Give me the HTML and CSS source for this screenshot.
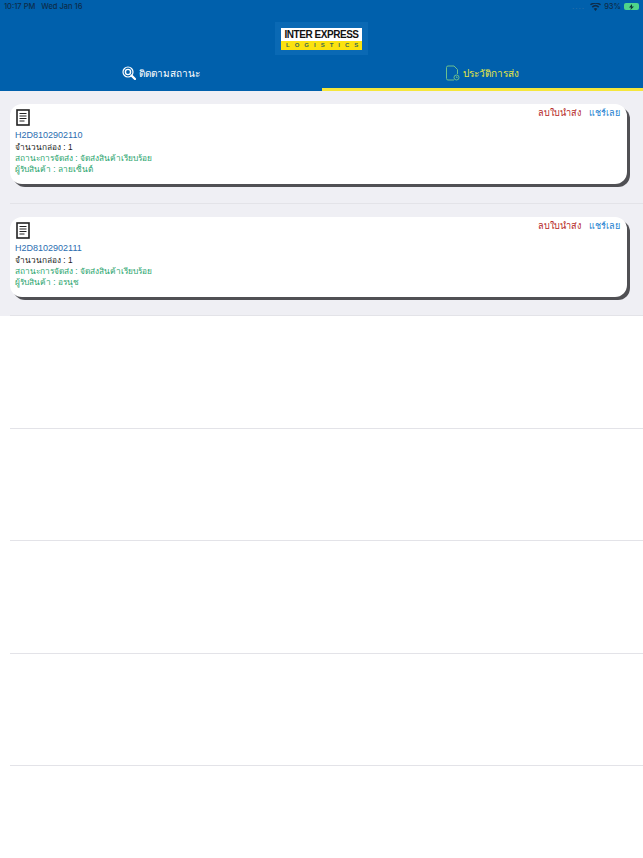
FILE: index.html
```html
<!DOCTYPE html>
<html lang="th">
<head>
  <meta charset="UTF-8" />
  <title>Inter Express Logistics</title>
  <link rel="stylesheet" href="styles.css">
</head>
<body>
<header class="app-header">
  <div class="status-bar">
    <span>10:17 PM &nbsp; Wed Jan 16</span>
    <div class="status-right">
      <span class="signal-dots">....</span>
      <svg class="wifi" width="11" height="8" viewBox="0 0 22 16"><path d="M11 16 7.4 11.6a5.6 5.6 0 0 1 7.2 0zM5.6 9.4 3.4 6.8a11.8 11.8 0 0 1 15.2 0l-2.2 2.6a8.4 8.4 0 0 0-10.8 0zM1.7 4.7 0 2.6a17 17 0 0 1 22 0l-1.7 2.1a14.4 14.4 0 0 0-18.6 0z" fill="#0d2c4a"/></svg>
      <span>93%</span>
      <div class="battery">
        <svg width="7" height="6" viewBox="0 0 7 6"><path d="M4 0 1 3.400h2L2.500 6 6 2.500H4z" fill="#0d3a3a"/></svg>
      </div>
    </div>
  </div>
  <div class="logo-row">
    <div class="logo">
      <div class="logo-top">INTER EXPRESS</div>
      <div class="logo-bottom">LOGISTICS</div>
    </div>
  </div>
  <nav class="tabs">
    <div class="tab">
      <svg width="14" height="14" viewBox="0 0 14 14" fill="none" stroke="#fff"><circle cx="6" cy="6" r="5" stroke-width="1.2"/><circle cx="6" cy="6" r="2.6" stroke-width="1.4"/><path d="M9.6 9.6 13 13" stroke-width="2.2" stroke-linecap="round"/></svg>
      <span>ติดตามสถานะ</span>
    </div>
    <div class="tab tab-active">
      <svg width="14" height="16" viewBox="0 0 14 16" fill="none" stroke="#6cc08e" stroke-width="1"><path d="M8 15H2a1.500 1.500 0 0 1-1.500-1.500v-11A1.500 1.500 0 0 1 2 1h6l3.500 3.500V9"/><circle cx="10.500" cy="12.500" r="2.500"/><path d="M10.500 11.500v1h1"/></svg>
      <span>ประวัติการส่ง</span>
    </div>
  </nav>
</header>
<main>
  <section class="row row-card">
    <div class="card">
      <div class="card-top">
        <svg class="doc-icon" width="15" height="17" viewBox="0 0 15 17" fill="none" stroke="#222"><rect x="1" y="1" width="12" height="15" stroke-width="1.600"/><path d="M3.500 4.500h7M3.500 7h7M3.500 9.500h7M3.500 12h5" stroke-width="1"/></svg>
        <div class="card-actions">
          <span class="action-delete">ลบใบนำส่ง</span>
          <span class="action-share">แชร์เลย</span>
        </div>
      </div>
      <div class="tracking">H2D8102902110</div>
      <div class="line-count">จำนวนกล่อง : 1</div>
      <div class="line-green">สถานะการจัดส่ง : จัดส่งสินค้าเรียบร้อย</div>
      <div class="line-green">ผู้รับสินค้า : ลายเซ็นต์</div>
    </div>
  </section>
  <section class="row row-card">
    <div class="card">
      <div class="card-top">
        <svg class="doc-icon" width="15" height="17" viewBox="0 0 15 17" fill="none" stroke="#222"><rect x="1" y="1" width="12" height="15" stroke-width="1.600"/><path d="M3.500 4.500h7M3.500 7h7M3.500 9.500h7M3.500 12h5" stroke-width="1"/></svg>
        <div class="card-actions">
          <span class="action-delete">ลบใบนำส่ง</span>
          <span class="action-share">แชร์เลย</span>
        </div>
      </div>
      <div class="tracking">H2D8102902111</div>
      <div class="line-count">จำนวนกล่อง : 1</div>
      <div class="line-green">สถานะการจัดส่ง : จัดส่งสินค้าเรียบร้อย</div>
      <div class="line-green">ผู้รับสินค้า : อรนุช</div>
    </div>
  </section>
  <div class="row"></div>
  <div class="row"></div>
  <div class="row"></div>
  <div class="row"></div>
</main>
</body>
</html>
```

FILE: styles.css
```css
* {
  box-sizing: border-box;
}
html, body {
  height: 100%;
}
body {
  font-family: 'Liberation Sans', 'Noto Sans', sans-serif;
  margin: 0;
  background: #fff;
  color: #222;
  overflow: hidden;
}
.app-header {
  background: #0060ac;
  height: 91px;
}
.status-bar {
  display: flex;
  justify-content: space-between;
  align-items: center;
  height: 13px;
  padding: 0 4px;
  font-family: 'Inter', sans-serif;
  font-size: 7.500px;
  font-weight: 500;
  color: #0d2c4a;
}
.status-right {
  display: flex;
  align-items: center;
  gap: 3px;
}
.signal-dots {
  margin-right: 2px;
  letter-spacing: 1px;
  color: #2a6fa8;
}
.battery {
  display: flex;
  justify-content: center;
  align-items: center;
  width: 15px;
  height: 7px;
  background: #4fd58a;
  border-radius: 2px;
}
.logo-row {
  display: flex;
  justify-content: center;
  height: 42px;
  padding-top: 9px;
}
.logo {
  width: 93px;
  height: 33px;
  padding: 6px 6px 5px;
  background: #0a69b4;
}
.logo-top {
  height: 13px;
  line-height: 13px;
  background: #fff;
  color: #111;
  font-weight: bold;
  font-size: 10px;
  letter-spacing: -0.450px;
  text-align: center;
  white-space: nowrap;
}
.logo-bottom {
  height: 9px;
  line-height: 9px;
  padding-left: 5px;
  background: #fbe210;
  color: #3a6a50;
  font-weight: bold;
  font-size: 6px;
  letter-spacing: 5px;
  text-align: center;
  white-space: nowrap;
}
.tabs {
  display: flex;
  height: 36px;
}
.tab {
  flex: 1;
  display: flex;
  justify-content: center;
  align-items: center;
  gap: 3px;
  font-size: 10px;
  font-weight: 500;
  color: #fff;
}
.tab-active {
  color: #e4e545;
  box-shadow: inset 0 -3px 0 #f5e63c;
}
main {
  display: flex;
  flex-direction: column;
}
.row {
  display: flex;
  flex-direction: column;
  justify-content: space-between;
  height: 112.500px;
}
.row::after {
  content: "";
  display: block;
  height: 1px;
  margin-left: 10px;
  margin-top: auto;
  background: #e3e3e8;
}
.row-card {
  background: #efeff4;
}
.card {
  height: 80px;
  margin: 13px 16px 0 10px;
  padding: 4px 7px 0 5px;
  background: #fff;
  border-radius: 12px;
  box-shadow: 3px 3px 0 #505054;
  font-size: 8.300px;
  line-height: 11px;
}
.card-top {
  display: flex;
  justify-content: space-between;
  align-items: flex-start;
  height: 22px;
}
.doc-icon {
  margin-top: 1px;
  margin-left: 1px;
}
.card-actions {
  display: flex;
  align-items: baseline;
  gap: 8px;
  font-size: 9.100px;
  line-height: 11px;
}
.action-delete {
  color: #b5261e;
}
.action-share {
  color: #1d7fd0;
}
.tracking {
  font-size: 9px;
  color: #2a6db0;
}
.line-count {
  margin-top: 1px;
  color: #222;
}
.line-green {
  color: #1fa36c;
}
```
